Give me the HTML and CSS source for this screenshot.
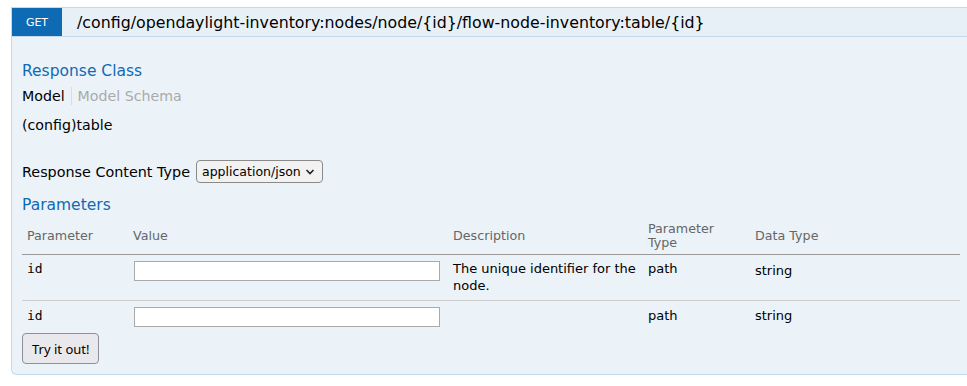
FILE: index.html
```html
<!DOCTYPE html>
<html lang="en">
<head>
    <meta charset="UTF-8">
    <title>Swagger UI || GET table</title>
    <link rel="stylesheet" href="styles.css">
</head>
<body>
    <div class="operation">
        <div class="heading">
            <span class="http-method">GET</span>
            <span class="path">/config/opendaylight-inventory:nodes/node/{id}/flow-node-inventory:table/{id}</span>
        </div>
        <div class="content">
            <h4>Response Class</h4>
            <div class="signature-nav">
                <a class="selected">Model</a>
                <a>Model Schema</a>
            </div>
            <div class="signature">(config)table</div>

            <div class="content-type">
                <label for="contentType">Response Content Type</label>
                <div class="select-wrap">
                    <select id="contentType">
                        <option>application/json</option>
                    </select>
                    <svg class="chevron" width="10" height="6" viewBox="0 0 10 6">
                        <path d="M1.5 1 L5 4.5 L8.5 1" fill="none" stroke="#222" stroke-width="1.6"/>
                    </svg>
                </div>
            </div>

            <h4 class="params-title">Parameters</h4>
            <table class="params">
                <thead>
                    <tr>
                        <th class="col-name">Parameter</th>
                        <th class="col-value">Value</th>
                        <th class="col-desc">Description</th>
                        <th class="col-type">Parameter<br>Type</th>
                        <th>Data Type</th>
                    </tr>
                </thead>
                <tbody>
                    <tr>
                        <td class="code">id</td>
                        <td><input type="text" name="id"></td>
                        <td>The unique identifier for the node.</td>
                        <td>path</td>
                        <td class="data-type">string</td>
                    </tr>
                    <tr class="last">
                        <td class="code">id</td>
                        <td><input type="text" name="id"></td>
                        <td></td>
                        <td>path</td>
                        <td class="data-type">string</td>
                    </tr>
                </tbody>
            </table>

            <div class="submit">
                <button type="button">Try it out!</button>
            </div>
        </div>
    </div>
</body>
</html>
```

FILE: styles.css
```css
html, body {
    overflow: hidden;
}
body {
    font-family: "DejaVu Sans", sans-serif;
    font-size: 14.2px;
    color: #000;
    background: #fff;
    margin: 0;
    padding: 7px 0 0 11px;
}

.operation {
    width: 980px;
}

.heading {
    display: flex;
    align-items: center;
    height: 28px;
    background-color: #e7f0f7;
    border: 1px solid #c3d9ec;
}
.http-method {
    width: 50px;
    height: 28px;
    background-color: #0f6ab4;
    color: #fff;
    font-size: 11px;
    display: flex;
    align-items: center;
    justify-content: center;
}
.path {
    margin-left: 15px;
    font-size: 15.8px;
}

.content {
    background-color: #ebf3f9;
    border: 1px solid #c3d9ec;
    border-top: none;
    border-bottom-left-radius: 6px;
    padding: 15px 10px 10px 10px;
}

h4 {
    margin: 10px 0 0 0;
    font-size: 15.5px;
    font-weight: normal;
    color: #0f6ab4;
    line-height: 19px;
}

.signature-nav {
    display: flex;
    margin-top: 6px;
    line-height: 18px;
}
.signature-nav a {
    color: #aaa;
    padding: 0 6px;
    border-left: 1px solid #ddd;
}
.signature-nav a.selected {
    color: #000;
    padding-left: 0;
    border-left: none;
}

.signature {
    margin-top: 11px;
    line-height: 18px;
}

.content-type {
    margin-top: 26px;
    display: flex;
    align-items: center;
}
.content-type label {
    font-size: 14.35px;
    margin-right: 6px;
}
.select-wrap {
    position: relative;
    display: flex;
}
.content-type select {
    appearance: none;
    -webkit-appearance: none;
    box-sizing: border-box;
    width: 127px;
    height: 23px;
    padding: 0 0 0 5px;
    font-family: "DejaVu Sans", sans-serif;
    font-size: 12.5px;
    color: #000;
    background-color: #f2f2f2;
    border: 1px solid #8a8a8a;
    border-radius: 4px;
}
.chevron {
    position: absolute;
    right: 8px;
    top: 9px;
    pointer-events: none;
}

.params-title {
    margin-top: 13px;
}

.params {
    width: 938px;
    border-collapse: collapse;
    margin-top: 4px;
    font-size: 13px;
}
.params th {
    text-align: left;
    font-weight: normal;
    color: #666;
    font-size: 12.7px;
    line-height: 14px;
    padding: 3px 5px 4px 5px;
    height: 28px;
    border-bottom: 1px solid #999;
}
.params th.col-name { width: 96px; }
.params th.col-value { width: 310px; }
.params th.col-desc { width: 185px; }
.params th.col-type { width: 97px; }

.params td {
    vertical-align: top;
    padding: 5px 5px 6px 5px;
    line-height: 17px;
    border-bottom: 1px solid #ccc;
}
.params tr.last td {
    border-bottom: none;
    padding-top: 6px;
    padding-bottom: 0;
}
.params td.code {
    font-family: "DejaVu Sans Mono", monospace;
    font-size: 13px;
}
.params td.data-type {
    padding-top: 7px;
}
.params input {
    display: block;
    box-sizing: border-box;
    width: 306px;
    height: 20px;
    margin: 1px 0 0 1px;
    border: 1px solid #aaa;
    background: #fff;
}
.params tr.last input {
    margin-top: 0;
}

.submit {
    margin-top: 6px;
}
.submit button {
    font-family: "Noto Sans", sans-serif;
    font-size: 13px;
    height: 31px;
    padding: 0 9px;
    border: 1px solid #8f8f9d;
    border-radius: 4px;
    background-color: #e9e9ed;
    color: #000;
}
```
